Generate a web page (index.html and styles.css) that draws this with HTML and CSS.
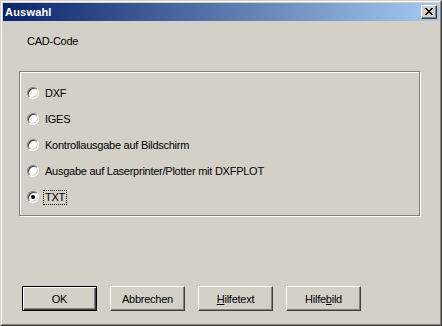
FILE: index.html
```html
<!DOCTYPE html>
<html lang="de">
<head>
    <meta charset="UTF-8">
    <title>Auswahl</title>
    <link rel="stylesheet" href="styles.css">
</head>
<body>

    <div class="window">
        <div class="frame">
            <div class="titlebar">
                <span class="title">Auswahl</span>
                <button class="close" title="Schließen">
                    <svg width="8" height="7" viewBox="0 0 8 7">
                        <path d="M0 0h2v1h1v1h2v-1h1v-1h2v1h-1v1h-1v1h-1v1h1v1h1v1h1v1h-2v-1h-1v-1h-2v1h-1v1h-2v-1h1v-1h1v-1h1v-1h-1v-1h-1v-1h-1z" fill="#000"/>
                    </svg>
                </button>
            </div>

            <div class="content">
                <p class="label">CAD-Code</p>

                <div class="group">
                    <label class="option"><span class="radio"></span><span class="text">DXF</span></label>
                    <label class="option"><span class="radio"></span><span class="text">IGES</span></label>
                    <label class="option"><span class="radio"></span><span class="text">Kontrollausgabe auf Bildschirm</span></label>
                    <label class="option"><span class="radio"></span><span class="text">Ausgabe auf Laserprinter/Plotter mit DXFPLOT</span></label>
                    <label class="option"><span class="radio checked"></span><span class="text focus">TXT</span></label>
                </div>

                <div class="buttons">
                    <button class="button default">OK</button>
                    <button class="button">Abbrechen</button>
                    <button class="button"><u>H</u>ilfetext</button>
                    <button class="button">Hilfe<u>b</u>ild</button>
                </div>
            </div>
        </div>
    </div>

</body>
</html>
```

FILE: styles.css
```css
* {
    margin: 0;
    padding: 0;
    box-sizing: border-box;
}

body {
    font-family: 'Liberation Sans', Arial, sans-serif;
    font-size: 11px;
    letter-spacing: -0.25px;
    color: #000;
    background: #d4d0c8;
}

.window {
    width: 442px;
    height: 326px;
    border: 1px solid;
    border-color: #d4d0c8 #404040 #404040 #d4d0c8;
}

.frame {
    height: 100%;
    border: 1px solid;
    border-color: #fff #808080 #808080 #fff;
    padding: 1px;
    background: #d4d0c8;
}

/* title bar */
.titlebar {
    height: 18px;
    display: flex;
    align-items: center;
    justify-content: space-between;
    padding: 0 2px 0 2px;
    background: linear-gradient(to right, #0a246a, #a6caf0);
}

.title {
    color: #fff;
    font-weight: bold;
    font-size: 11px;
    letter-spacing: 0.2px;
}

.close {
    width: 16px;
    height: 14px;
    display: flex;
    align-items: center;
    justify-content: center;
    background: #d4d0c8;
    border: 1px solid;
    border-color: #fff #404040 #404040 #fff;
    box-shadow: inset -1px -1px 0 #808080;
    padding: 0 1px 1px 0;
}

/* dialog body */
.content {
    padding: 14px 0 0 16px;
}

.label {
    margin-left: 8px;
    line-height: 13px;
}

.group {
    width: 401px;
    height: 145px;
    margin-top: 23px;
    padding: 8px 0 0 7px;
    border: 1px solid #808080;
    box-shadow: inset 1px 1px 0 #fff, 1px 1px 0 #fff;
}

.option {
    height: 26px;
    display: flex;
    align-items: center;
}

.radio {
    width: 12px;
    height: 12px;
    margin-right: 6px;
    border-radius: 50%;
    background: #fff;
    border: 1px solid;
    border-color: #808080 #fff #fff #808080;
    box-shadow: inset 1px 1px 0 #404040, inset -1px -1px 0 #d4d0c8;
    display: flex;
    align-items: center;
    justify-content: center;
}

.radio.checked::after {
    content: '';
    width: 4px;
    height: 4px;
    border-radius: 50%;
    background: #000;
}

.text {
    line-height: 13px;
}

.text.focus {
    outline: 1px dotted #000;
    outline-offset: 0;
    margin-left: -1px;
    padding: 0 1px;
}

/* buttons */
.buttons {
    display: flex;
    gap: 13px;
    margin-top: 70px;
    padding-left: 3px;
}

.button {
    width: 75px;
    height: 25px;
    font-family: 'Liberation Sans', Arial, sans-serif;
    font-size: 11px;
    letter-spacing: -0.25px;
    color: #000;
    background: #d4d0c8;
    border: 1px solid;
    border-color: #fff #404040 #404040 #fff;
    box-shadow: inset -1px -1px 0 #808080;
}

.button.default {
    border: 1px solid #000;
    box-shadow: inset 1px 1px 0 #fff, inset -1px -1px 0 #404040, inset -2px -2px 0 #808080;
}

.button u {
    text-decoration: underline;
}
```
